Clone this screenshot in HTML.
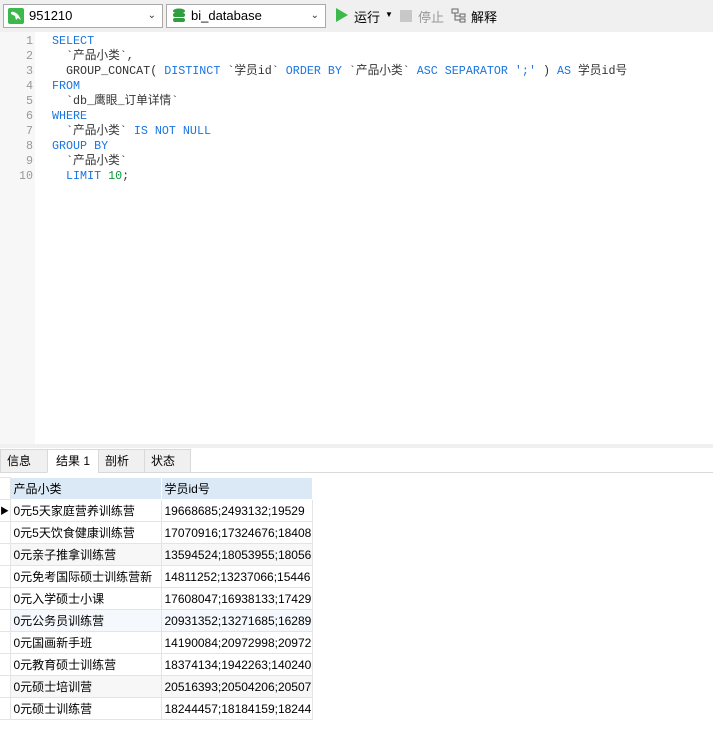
<!DOCTYPE html>
<html><head><meta charset="utf-8"><style>
*{margin:0;padding:0;box-sizing:border-box}
body{width:713px;height:743px;background:#fff;font-family:"Liberation Sans","Noto Sans CJK SC",sans-serif;font-size:12px;color:#000;position:relative;overflow:hidden}
.tb{position:absolute;left:0;top:0;width:713px;height:32px;background:#f0f0f0}
.sel{position:absolute;top:4px;height:24px;border:1px solid #a9a9a9;background:#fff;font-size:13px;line-height:22px}
.sel .arr{position:absolute;right:6px;top:0;font-size:10px;color:#333}
.ed{position:absolute;left:0;top:32px;width:713px;height:412px;background:#fff}
.gut{position:absolute;left:0;top:0;width:35px;height:412px;background:#f7f7f7}
.ln{position:absolute;left:0;width:33px;text-align:right;color:#999;font-family:"Liberation Mono",monospace;font-size:11.7px;line-height:15px;height:15px}
.cd{position:absolute;left:52px;font-family:"Liberation Mono","Noto Sans CJK SC",monospace;font-size:11.7px;line-height:15px;height:15px;white-space:pre;color:#333}
.k{color:#1a75e0}.n{color:#0a9a3a}
.band{position:absolute;left:0;top:444px;width:713px;height:4px;background:#f0f0f0}
.tab{position:absolute;top:449px;height:24px;background:#f0f0f0;border:1px solid #d9d9d9;font-size:12px;line-height:22px;padding-left:6px}
.tline{position:absolute;left:0;top:472px;width:713px;height:1px;background:#d9d9d9}
table{position:absolute;left:0;top:477px;border-collapse:collapse;font-size:12px}
td{height:22px;border:1px solid #e4e4e4;padding:0 0 0 3px;white-space:nowrap;overflow:hidden;line-height:20px}
td.i{width:10px;padding:0;border-left:none;background:#fff}
td.a{width:151px}td.b{width:151px;max-width:151px}
tr.h td.a,tr.h td.b{background:#dbe9f7;border-color:#fff}
</style></head><body>
<div class="tb">
 <div class="sel" style="left:3px;width:160px"><svg style="position:absolute;left:4px;top:3px" width="16" height="16"><rect width="16" height="16" rx="2" fill="#3cb94a"/><path d="M3 4c3-1 6 1 8 4l2 4-3-2-2 2-1-4-4-2z" fill="#fff"/></svg><span style="position:absolute;left:25px">951210</span><span class="arr">&#8964;</span></div>
 <div class="sel" style="left:166px;width:160px"><svg style="position:absolute;left:5px;top:3px" width="14" height="17"><ellipse cx="7" cy="3" rx="6" ry="2.5" fill="#2e9e3e"/><rect x="1" y="5" width="12" height="4" rx="2" fill="#2e9e3e"/><rect x="1" y="10" width="12" height="4" rx="2" fill="#2e9e3e"/></svg><span style="position:absolute;left:24px">bi_database</span><span class="arr">&#8964;</span></div>
 <svg style="position:absolute;left:336px;top:8px" width="12" height="14"><path d="M0 0L12 7 0 14z" fill="#3cb94a"/></svg>
 <span style="position:absolute;left:354px;top:7px;font-size:13px">运行</span>
 <span style="position:absolute;left:385px;top:10px;font-size:8px">▼</span>
 <div style="position:absolute;left:400px;top:10px;width:12px;height:12px;background:#c8c8c8"></div>
 <span style="position:absolute;left:418px;top:7px;font-size:13px;color:#999">停止</span>
 <svg style="position:absolute;left:451px;top:8px" width="16" height="16" fill="none" stroke="#666"><rect x="1" y="1" width="6" height="4"/><rect x="9" y="6" width="5" height="3"/><rect x="9" y="11" width="5" height="3"/><path d="M4 5v7h5M4 8h5"/></svg>
 <span style="position:absolute;left:471px;top:7px;font-size:13px">解释</span>
</div>
<div class="ed"><div class="gut"></div>
<div class="ln" style="top:2px">1</div><div class="ln" style="top:17px">2</div><div class="ln" style="top:32px">3</div><div class="ln" style="top:47px">4</div><div class="ln" style="top:62px">5</div><div class="ln" style="top:77px">6</div><div class="ln" style="top:92px">7</div><div class="ln" style="top:107px">8</div><div class="ln" style="top:122px">9</div><div class="ln" style="top:137px">10</div>
<div class="cd" style="top:2px"><span class="k">SELECT</span></div>
<div class="cd" style="top:17px">  `产品小类`,</div>
<div class="cd" style="top:32px">  GROUP_CONCAT( <span class="k">DISTINCT</span> `学员id` <span class="k">ORDER BY</span> `产品小类` <span class="k">ASC SEPARATOR</span> <span class="k">';'</span> ) <span class="k">AS</span> 学员id号</div>
<div class="cd" style="top:47px"><span class="k">FROM</span></div>
<div class="cd" style="top:62px">  `db_鹰眼_订单详情`</div>
<div class="cd" style="top:77px"><span class="k">WHERE</span></div>
<div class="cd" style="top:92px">  `产品小类` <span class="k">IS NOT NULL</span></div>
<div class="cd" style="top:107px"><span class="k">GROUP BY</span></div>
<div class="cd" style="top:122px">  `产品小类`</div>
<div class="cd" style="top:137px">  <span class="k">LIMIT</span> <span class="n">10</span>;</div>
</div>
<div class="band"></div>
<div class="tline"></div>
<div class="tab" style="left:0;width:48px">信息</div>
<div class="tab" style="left:47px;width:52px;background:#fff;border-bottom-color:#fff;padding-left:8px">结果 1</div>
<div class="tab" style="left:98px;width:47px">剖析</div>
<div class="tab" style="left:144px;width:47px">状态</div>
<table>
<tr class="h"><td class="i"></td><td class="a">产品小类</td><td class="b">学员id号</td></tr>
<tr><td class="i" style="font-size:9px">▶</td><td class="a">0元5天家庭营养训练营</td><td class="b">19668685;2493132;19529</td></tr>
<tr><td class="i"></td><td class="a">0元5天饮食健康训练营</td><td class="b">17070916;17324676;18408</td></tr>
<tr style="background:#f7f7f7"><td class="i"></td><td class="a">0元亲子推拿训练营</td><td class="b">13594524;18053955;18056</td></tr>
<tr><td class="i"></td><td class="a">0元免考国际硕士训练营新</td><td class="b">14811252;13237066;15446</td></tr>
<tr><td class="i"></td><td class="a">0元入学硕士小课</td><td class="b">17608047;16938133;17429</td></tr>
<tr style="background:#f5f9fd"><td class="i"></td><td class="a">0元公务员训练营</td><td class="b">20931352;13271685;16289</td></tr>
<tr><td class="i"></td><td class="a">0元国画新手班</td><td class="b">14190084;20972998;20972</td></tr>
<tr><td class="i"></td><td class="a">0元教育硕士训练营</td><td class="b">18374134;1942263;140240</td></tr>
<tr style="background:#f7f7f7"><td class="i"></td><td class="a">0元硕士培训营</td><td class="b">20516393;20504206;20507</td></tr>
<tr><td class="i"></td><td class="a">0元硕士训练营</td><td class="b">18244457;18184159;18244</td></tr>
</table>
</body></html>
